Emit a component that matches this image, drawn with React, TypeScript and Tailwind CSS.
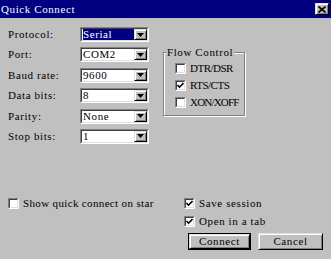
import React from "react";

const sunken =
  "border border-t-[#808080] border-l-[#808080] border-b-white border-r-white";
const sunkenInner =
  "border border-t-[#404040] border-l-[#404040] border-b-[#dfdfdf] border-r-[#dfdfdf]";
const raised =
  "border border-t-[#dfdfdf] border-l-[#dfdfdf] border-b-black border-r-black shadow-[inset_1px_1px_0_#ffffff,inset_-1px_-1px_0_#808080]";

function Combo({ value, selected }: { value: string; selected?: boolean }) {
  return (
    <div className={`w-[69px] h-[15px] ${sunken}`}>
      <div className={`h-full flex bg-white ${sunkenInner}`}>
        <div className="flex-1 flex items-center pl-[1px] min-w-0">
          <span
            className={`h-full flex items-center w-full leading-none ${
              selected ? "bg-[#000080] text-white" : "text-black"
            }`}
          >
            {value}
          </span>
        </div>
        <div className={`w-[13px] h-full bg-[#c0c0c0] flex items-center justify-center ${raised}`}>
          <svg width="7" height="4" viewBox="0 0 7 4">
            <path d="M0 0 H7 L3.5 4 Z" fill="black" />
          </svg>
        </div>
      </div>
    </div>
  );
}

function Check({ checked }: { checked?: boolean }) {
  return (
    <div className={`w-[11px] h-[11px] shrink-0 ${sunken}`}>
      <div className={`w-full h-full bg-white flex items-center justify-center ${sunkenInner}`}>
        {checked && (
          <svg width="7" height="7" viewBox="0 0 7 7">
            <path d="M0.5 3 L2.5 5.2 L6.5 1" stroke="black" strokeWidth="1.6" fill="none" />
          </svg>
        )}
      </div>
    </div>
  );
}

function CheckRow({
  label,
  checked,
  textClass = "",
}: {
  label: string;
  checked?: boolean;
  textClass?: string;
}) {
  return (
    <div className="flex items-center h-[11px] gap-[4px]">
      <Check checked={checked} />
      <span className={`leading-none whitespace-nowrap ${textClass}`}>{label}</span>
    </div>
  );
}

function Button({ label, def }: { label: string; def?: boolean }) {
  const inner = (
    <div className={`w-full h-full bg-[#c0c0c0] flex items-center justify-center ${raised}`}>
      <span className="leading-none">{label}</span>
    </div>
  );
  return def ? (
    <div className="w-[63px] h-[17px] border border-black">{inner}</div>
  ) : (
    <div className="w-[65px] h-[17px]">{inner}</div>
  );
}

export default function App() {
  const rows: [string, string, boolean?][] = [
    ["Protocol:", "Serial", true],
    ["Port:", "COM2"],
    ["Baud rate:", "9600"],
    ["Data bits:", "8"],
    ["Parity:", "None"],
    ["Stop bits:", "1"],
  ];
  return (
    <div className="w-[331px] h-[259px] bg-[#c0c0c0] flex flex-col font-['Liberation_Serif',serif] text-[11px] tracking-[0.6px] text-black overflow-hidden">
      <div className="h-[18px] bg-[#000080] flex items-center justify-between pl-[1px] pr-[2px] shrink-0">
        <span className="text-white leading-none">Quick Connect</span>
        <div className={`w-[14px] h-[12px] bg-[#c0c0c0] flex items-center justify-center ${raised}`}>
          <svg width="8" height="7" viewBox="0 0 8 7">
            <path d="M0.5 0.5 L7.5 6.5 M7.5 0.5 L0.5 6.5" stroke="black" strokeWidth="1.6" />
          </svg>
        </div>
      </div>

      <div className="flex pl-[8px] pt-[9px]">
        <div className="flex flex-col gap-[5.4px]">
          {rows.map(([l, v, s]) => (
            <div key={l} className="flex items-center h-[15px]">
              <span className="w-[72px] leading-none">{l}</span>
              <Combo value={v} selected={s} />
            </div>
          ))}
        </div>
        <div className="relative ml-[14px] mt-[25px] w-[82px] h-[64px] border border-[#808080] shadow-[inset_1px_1px_0_#ffffff,1px_1px_0_#ffffff]">
          <span className="absolute -top-[6px] left-[2px] px-[1px] bg-[#c0c0c0] leading-none whitespace-nowrap">
            Flow Control
          </span>
          <div className="flex flex-col gap-[6px] pt-[10px] pl-[11px]">
            <CheckRow label="DTR/DSR" textClass="tracking-[-0.5px]" />
            <CheckRow label="RTS/CTS" checked textClass="tracking-[-0.5px]" />
            <CheckRow label="XON/XOFF" textClass="tracking-[-0.8px]" />
          </div>
        </div>
      </div>

      <div className="flex flex-col mt-[54px]">
        <div className="flex items-center pl-[8px]">
          <div className="w-[176px]">
            <CheckRow label="Show quick connect on star" textClass="tracking-[0.35px]" />
          </div>
          <CheckRow label="Save session" checked />
        </div>
        <div className="pl-[184px] mt-[7px]">
          <CheckRow label="Open in a tab" checked />
        </div>
        <div className="flex justify-end gap-[7px] pr-[8px] mt-[6px]">
          <Button label="Connect" def />
          <Button label="Cancel" />
        </div>
      </div>
    </div>
  );
}
